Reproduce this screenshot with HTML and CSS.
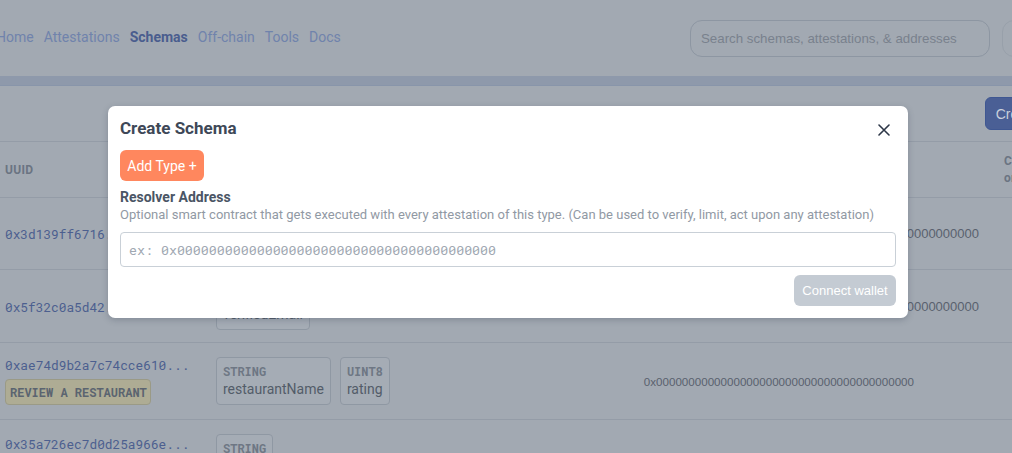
FILE: index.html
```html
<!DOCTYPE html>
<html lang="en">
<head>
<meta charset="utf-8">
<title>Schemas</title>
<link rel="stylesheet" href="styles.css">
</head>
<body>
<div class="page">
  <header class="topbar">
    <nav class="nav">
      <a class="nav-link">Home</a>
      <a class="nav-link">Attestations</a>
      <a class="nav-link nav-link--active">Schemas</a>
      <a class="nav-link">Off-chain</a>
      <a class="nav-link">Tools</a>
      <a class="nav-link">Docs</a>
    </nav>
    <div class="topbar-right">
      <div class="search">Search schemas, attestations, &amp; addresses</div>
      <div class="account"></div>
    </div>
  </header>
  <div class="band"></div>
  <main class="content">
    <div class="toolbar">
      <button class="create-btn">Create Schema</button>
    </div>
    <div class="table">
      <div class="row row--head">
        <div class="cell-uuid th">UUID</div>
        <div class="cell-fill"></div>
        <div class="cell-edge th th--two">Created<br>on</div>
      </div>
      <div class="row row--1">
        <div class="cell-uuid"><span class="hash">0x3d139ff6716...</span></div>
        <div class="cell-fill"></div>
        <div class="resolver">0x0000000000000000000000000000000000000000</div>
      </div>
      <div class="row row--2">
        <div class="cell-uuid"><span class="hash">0x5f32c0a5d42...</span></div>
        <div class="cell-fill chips">
          <div class="chip"><span class="chip-type">BOOL</span><span class="chip-name">verifiedEmail</span></div>
        </div>
        <div class="resolver">0x0000000000000000000000000000000000000000</div>
      </div>
      <div class="row row--3">
        <div class="cell-uuid stack">
          <span class="hash">0xae74d9b2a7c74cce610...</span>
          <span class="badge">REVIEW A RESTAURANT</span>
        </div>
        <div class="cell-fill chips">
          <div class="chip"><span class="chip-type">STRING</span><span class="chip-name">restaurantName</span></div>
          <div class="chip"><span class="chip-type">UINT8</span><span class="chip-name">rating</span></div>
        </div>
        <div class="resolver resolver--inset">0x0000000000000000000000000000000000000000</div>
      </div>
      <div class="row row--4">
        <div class="cell-uuid"><span class="hash">0x35a726ec7d0d25a966e...</span></div>
        <div class="cell-fill chips">
          <div class="chip"><span class="chip-type">STRING</span><span class="chip-name">name</span></div>
        </div>
      </div>
    </div>
  </main>

  <div class="overlay">
    <div class="modal">
      <div class="modal-head">
        <h2 class="modal-title">Create Schema</h2>
        <button class="close" aria-label="Close">
          <svg width="12" height="12" viewBox="0 0 12 12"><path d="M1 1 L11 11 M11 1 L1 11" stroke="#2d3748" stroke-width="1.6" stroke-linecap="round" fill="none"/></svg>
        </button>
      </div>
      <button class="add-type">Add Type +</button>
      <div class="label">Resolver Address</div>
      <div class="desc">Optional smart contract that gets executed with every attestation of this type. (Can be used to verify, limit, act upon any attestation)</div>
      <div class="input">ex: 0x0000000000000000000000000000000000000000</div>
      <div class="modal-foot">
        <button class="connect">Connect wallet</button>
      </div>
    </div>
  </div>
</div>
</body>
</html>
```
FILE: styles.css
```css
* { box-sizing: border-box; }
html, body { margin: 0; padding: 0; }
body {
  width: 1012px;
  height: 453px;
  overflow: hidden;
  background: #a2a9b2;
  font-family: Roboto, "Liberation Sans", sans-serif;
}
.page { position: relative; width: 1012px; height: 453px; overflow: hidden; }

.topbar {
  height: 76px;
  display: flex;
  align-items: center;
  justify-content: space-between;
}
.nav { display: flex; gap: 10px; margin-left: -4px; margin-top: -2px; }
.nav-link { font-size: 14px; color: #7083ac; text-decoration: none; }
.nav-link--active { color: #4a5d8e; font-weight: 700; }
.topbar-right { display: flex; align-items: center; gap: 12px; margin-right: -40px; }
.search {
  width: 300px;
  height: 37px;
  border: 1px solid #8d96a2;
  border-radius: 12px;
  font-family: "Liberation Sans", Arial, sans-serif;
  font-size: 13.3px;
  color: #79818d;
  display: flex;
  align-items: center;
  padding-left: 10px;
}
.account {
  width: 50px;
  height: 37px;
  border: 1px solid #98a0aa;
  border-radius: 12px;
}
.band {
  height: 10px;
  background: #8e99ab;
  border-bottom: 1px solid #8895aa;
}
.content { padding-top: 11px; }
.toolbar { height: 44px; display: flex; justify-content: flex-end; align-items: flex-start; margin-right: -92px; }
.create-btn {
  height: 33px;
  padding: 0 10px;
  border: 1px solid #3f5792;
  border-radius: 6px;
  background: #4a5f95;
  color: #c9d0dc;
  font-family: "Liberation Sans", Arial, sans-serif;
  font-size: 14px;
}
.table { border-top: 1px solid #949ca7; }
.row {
  display: flex;
  align-items: center;
  border-bottom: 1px solid #949ca7;
}
.row--head { height: 56px; }
.row--1 { height: 72px; }
.row--2 { height: 73px; }
.row--3 { height: 77px; }
.row--4 { height: 77px; align-items: flex-start; padding-top: 14px; }
.cell-uuid { width: 216px; padding-left: 5px; flex: none; }
.cell-fill { flex: 1; }
.th { font-size: 12px; font-weight: 700; color: #6b7482; letter-spacing: 0.3px; }
.cell-edge { width: 8px; flex: none; white-space: nowrap; line-height: 17px; }
.hash { font-family: "Roboto Mono", "DejaVu Sans Mono", "Liberation Mono", monospace; font-size: 12.8px; color: #4c5f8f; }
.stack { display: flex; flex-direction: column; align-items: flex-start; gap: 6px; padding-bottom: 1px; }
.badge {
  font-family: "Roboto Mono", "DejaVu Sans Mono", monospace;
  font-size: 12px;
  line-height: 16px;
  font-weight: 700;
  color: #5b6470;
  background: #aeac94;
  border: 1px solid #9a9a86;
  border-radius: 4px;
  padding: 4px 3px 4px 4px;
}
.chips { display: flex; gap: 9px; }
.chip {
  display: flex;
  flex-direction: column;
  border: 1px solid #8f98a3;
  border-radius: 4px;
  padding: 4px 6px 5px;
  background: #a5acb5;
}
.chip-type { font-family: "Roboto Mono", "DejaVu Sans Mono", monospace; font-size: 12px; font-weight: 700; color: #6e7784; line-height: 18px; }
.chip-name { font-size: 14px; color: #535c69; line-height: 19px; }
.resolver {
  font-family: "Liberation Sans", Arial, sans-serif;
  font-size: 13px;
  color: #59616e;
  flex: none;
  margin-right: 33px;
}
.resolver--inset { font-size: 11.6px; margin-right: 98px; }

.overlay {
  position: absolute;
  inset: 0;
  padding: 106px 0 0 108px;
}
.modal {
  width: 800px;
  background: #ffffff;
  border-radius: 7px;
  box-shadow: 0 2px 6px rgba(40, 50, 70, 0.25);
  padding: 10px 12px 12px;
}
.modal-head { display: flex; justify-content: space-between; align-items: center; height: 24px; }
.modal-title { margin: 0; font-size: 17px; font-weight: 700; color: #3e4857; }
.close { border: 0; background: none; padding: 0; width: 20px; height: 20px; display: flex; align-items: center; justify-content: center; margin-right: 2px; margin-top: 4px; }
.add-type {
  margin-top: 10px;
  height: 31px;
  width: 84px;
  border: 0;
  border-radius: 6px;
  background: #ff875e;
  color: #ffffff;
  font-family: Roboto, sans-serif;
  font-size: 14px;
  padding: 0;
}
.label { margin-top: 7px; font-size: 14px; font-weight: 700; color: #4a5565; line-height: 18px; }
.desc { font-size: 13px; color: #9199a4; line-height: 18px; }
.input {
  margin-top: 8px;
  height: 35px;
  border: 1px solid #c9d0d7;
  border-radius: 4px;
  display: flex;
  align-items: center;
  padding-left: 8px;
  font-family: "Roboto Mono", "DejaVu Sans Mono", monospace;
  font-size: 13.3px;
  color: #a0a8b2;
}
.modal-foot { display: flex; justify-content: flex-end; margin-top: 8px; }
.connect {
  height: 31px;
  width: 102px;
  border: 0;
  border-radius: 6px;
  background: #c4cbd3;
  color: #ffffff;
  font-family: "Liberation Sans", Arial, sans-serif;
  font-size: 13px;
  padding: 0;
}
```
